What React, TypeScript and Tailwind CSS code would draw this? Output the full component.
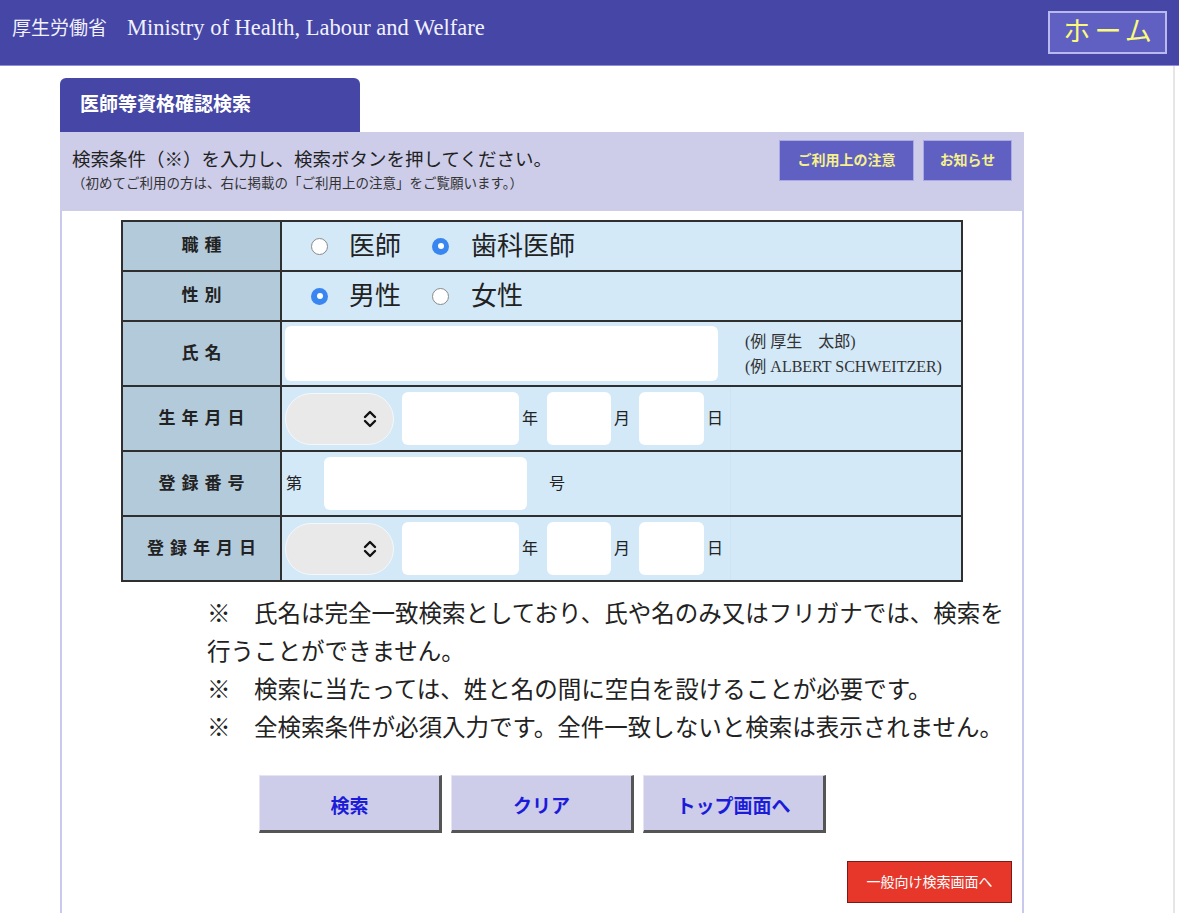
const JP = 'font-["Liberation_Serif","Noto_Sans_CJK_JP",serif]'
const GOTHIC = 'font-["Noto_Sans_CJK_JP","Liberation_Sans",sans-serif]'

function Radio({ checked }: { checked?: boolean }) {
  return checked ? (
    <span className="flex h-[17px] w-[17px] shrink-0 items-center justify-center rounded-full bg-[#3a86f0]">
      <span className="h-[6px] w-[6px] rounded-full bg-white" />
    </span>
  ) : (
    <span className="block h-[17px] w-[17px] shrink-0 rounded-full border border-[#8a8a8a] bg-white" />
  )
}

function SelectBox() {
  return (
    <div className="flex h-[52px] w-[109px] items-center justify-end rounded-full border border-[#f4f8fc] bg-[#e9e9e9] pr-[15px]">
      <svg width="16" height="20" viewBox="0 0 16 20" fill="none" stroke="#111" strokeWidth="2.4" strokeLinecap="round" strokeLinejoin="round">
        <path d="M3 8l5-5 5 5" />
        <path d="M3 12l5 5 5-5" />
      </svg>
    </div>
  )
}

function Input({ w }: { w: string }) {
  return <div className={`h-[53px] rounded-md bg-white ${w}`} />
}

function DateFields() {
  return (
    <div className="flex h-full items-center pl-[3px] text-[16px] text-[#222]">
      <SelectBox />
      <div className="ml-[8px]">
        <Input w="w-[117px]" />
      </div>
      <span className="ml-[3px] w-[25px]">年</span>
      <Input w="w-[64px]" />
      <span className="ml-[3px] w-[25px]">月</span>
      <Input w="w-[65px]" />
      <span className="ml-[3px]">日</span>
      <div className="ml-auto h-full w-[231px] border-l border-[#cfe4f2]" />
    </div>
  )
}

function Row({
  label,
  h,
  first,
  children,
}: {
  label: string
  h: string
  first?: boolean
  children: React.ReactNode
}) {
  return (
    <div className={`flex ${h} ${first ? '' : 'border-t-2 border-[#2f2f2f]'}`}>
      <div className="flex w-[159px] shrink-0 items-center justify-center border-r-2 border-[#2f2f2f] bg-[#b3cadb] text-[17px] font-bold tracking-[0.35em] text-[#222]">
        <span className="pl-[0.35em]">{label}</span>
      </div>
      <div className="flex-1 bg-[#d4e9f8]">{children}</div>
    </div>
  )
}

export default function App() {
  return (
    <div className={`min-h-[913px] w-full overflow-hidden bg-white ${JP}`}>
      {/* Header */}
      <header className="flex h-[66px] items-start justify-between border-b border-[#8e8fd6] bg-[#4546a5] pl-[12px] pr-[12px]">
        <div className="pt-[11px] text-[19px] text-[#f1f1ff]">
          厚生労働省<span className="ml-[20px] text-[22.5px]">Ministry of Health, Labour and Welfare</span>
        </div>
        <button className="mt-[11px] flex h-[43px] w-[119px] items-center justify-center border-2 border-[#b9b9ef] bg-[#6060c2] text-[27px] tracking-[0.15em] text-[#fafa7c]">
          <span className="pl-[0.15em]">ホーム</span>
        </button>
      </header>

      <div className="flex">
        <main className="flex-1 pl-[60px]">
          {/* Tab */}
          <div className="mt-[12px] flex h-[54px] w-[300px] items-center rounded-t-md bg-[#4546a5] pl-[20px] text-[19px] font-bold text-white">
            医師等資格確認検索
          </div>

          <section className="w-[964px] border-x-2 border-[#c9c9ee]">
            {/* Panel header */}
            <div className="-mx-[2px] flex h-[79px] justify-between bg-[#cdcdea] pl-[12px] pr-[12px]">
              <div className="pt-[15px]">
                <p className="text-[18.5px] leading-[26px] text-[#222]">
                  検索条件（※）を入力し、検索ボタンを押してください。
                </p>
                <p className="mt-[2px] text-[13.5px] leading-[18px] text-[#333]">
                  （初めてご利用の方は、右に掲載の「ご利用上の注意」をご覧願います。）
                </p>
              </div>
              <div className="flex gap-[9px] pt-[8px]">
                <button className="flex h-[41px] w-[135px] items-center justify-center border border-[#a9a9e6] bg-[#6060c2] text-[14px] font-bold text-[#f6f18c]">
                  ご利用上の注意
                </button>
                <button className="flex h-[41px] w-[89px] items-center justify-center border border-[#a9a9e6] bg-[#6060c2] text-[14px] font-bold text-[#f6f18c]">
                  お知らせ
                </button>
              </div>
            </div>

            {/* Form table */}
            <div className="ml-[59px] mt-[9px] w-[842px] border-2 border-[#2f2f2f]">
              <Row label="職種" h="h-[48px]" first>
                <div className="flex h-full items-center pl-[29px] text-[26px] text-[#222]">
                  <Radio />
                  <span className="ml-[21px]">医師</span>
                  <span className="ml-[31px] flex">
                    <Radio checked />
                  </span>
                  <span className="ml-[22px]">歯科医師</span>
                </div>
              </Row>
              <Row label="性別" h="h-[50px]">
                <div className="flex h-full items-center pl-[29px] text-[26px] text-[#222]">
                  <Radio checked />
                  <span className="ml-[21px]">男性</span>
                  <span className="ml-[31px] flex">
                    <Radio />
                  </span>
                  <span className="ml-[22px]">女性</span>
                </div>
              </Row>
              <Row label="氏名" h="h-[65px]">
                <div className="flex h-full items-center pl-[3px]">
                  <div className="h-[55px] w-[433px] rounded-md bg-white" />
                  <div className="ml-[27px] text-[16px] leading-[25px] text-[#333]">
                    <p>(例 厚生　太郎)</p>
                    <p>(例 ALBERT SCHWEITZER)</p>
                  </div>
                </div>
              </Row>
              <Row label="生年月日" h="h-[65px]">
                <DateFields />
              </Row>
              <Row label="登録番号" h="h-[65px]">
                <div className="flex h-full items-center pl-[4px] text-[16px] text-[#222]">
                  <span className="w-[38px]">第</span>
                  <Input w="w-[203px]" />
                  <span className="ml-[22px]">号</span>
                  <div className="ml-auto h-full w-[231px] border-l border-[#cfe4f2]" />
                </div>
              </Row>
              <Row label="登録年月日" h="h-[65px]">
                <DateFields />
              </Row>
            </div>

            {/* Notes */}
            <div className="ml-[145px] mt-[13px] w-[812px] text-[23.5px] leading-[38px] text-[#222]">
              <p>※　氏名は完全一致検索としており、氏や名のみ又はフリガナでは、検索を行うことができません。</p>
              <p>※　検索に当たっては、姓と名の間に空白を設けることが必要です。</p>
              <p>※　全検索条件が必須入力です。全件一致しないと検索は表示されません。</p>
            </div>

            {/* Buttons */}
            <div className={`ml-[197px] mt-[28px] flex gap-[9px] ${GOTHIC}`}>
              {['検索', 'クリア', 'トップ画面へ'].map((t) => (
                <button
                  key={t}
                  className="flex h-[58px] w-[183px] items-center justify-center border-b-[3px] border-l border-r-[3px] border-t border-[#e4e4f4] border-b-[#555] border-r-[#555] bg-[#cdcdea] pt-[4px] text-[19px] font-bold text-[#1c1cd8]"
                >
                  {t}
                </button>
              ))}
            </div>

            <div className="flex justify-end pr-[10px] pt-[28px] pb-[20px]">
              <button className="flex h-[42px] w-[165px] items-center justify-center border border-[#7a1a12] bg-[#e6372a] text-[14px] text-white">
                一般向け検索画面へ
              </button>
            </div>
          </section>
        </main>
        <div className="w-[6px] shrink-0 border-l-2 border-[#e6e6e6]" />
      </div>
    </div>
  )
}
